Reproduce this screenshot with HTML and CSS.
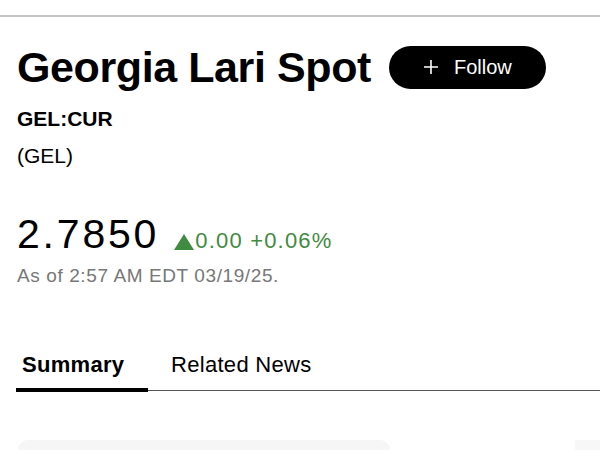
FILE: index.html
```html
<!DOCTYPE html>
<html lang="en">
<head>
    <meta charset="UTF-8">
    <meta name="viewport" content="width=device-width, initial-scale=1.0">
    <title>Georgia Lari Spot</title>
    <link rel="stylesheet" href="styles.css">
</head>
<body>

<div class="topbar"></div>

<div class="quote">
    <div class="title-row">
        <h1>Georgia Lari Spot</h1>
        <button class="follow">
            <svg width="16" height="16" viewBox="0 0 16 16"><path d="M8 1v14M1 8h14" stroke="#fff" stroke-width="1.6" fill="none"/></svg>
            Follow
        </button>
    </div>
    <p class="ticker">GEL:CUR</p>
    <p class="currency">(GEL)</p>

    <div class="price-row">
        <span class="price">2.7850</span>
        <span class="change">
            <svg class="arrow" width="20" height="16" viewBox="0 0 20 16"><path d="M10 0L20 16H0Z" fill="#3f8b40"/></svg>
            0.00 +0.06%
        </span>
    </div>
    <p class="asof">As of 2:57 AM EDT 03/19/25.</p>
</div>

<div class="tabs">
    <span class="tab active">Summary</span>
    <span class="tab">Related News</span>
</div>

<div class="cards">
    <div class="card"></div>
    <div class="card-side"></div>
</div>

</body>
</html>
```

FILE: styles.css
```css
body {
    margin: 0;
    font-family: "Liberation Sans", Arial, sans-serif;
    background-color: #fff;
    color: #000;
    overflow: hidden;
}
.topbar {
    height: 15px;
    border-bottom: 2px solid #c4c4c4;
}
.quote {
    padding: 0 17px;
}
.title-row {
    display: flex;
    align-items: center;
    gap: 18px;
    margin-top: 24px;
}
h1 {
    margin: 0;
    font-size: 43px;
    letter-spacing: -0.4px;
    line-height: 52px;
}
.follow {
    display: flex;
    align-items: center;
    gap: 15px;
    height: 43px;
    padding: 0 34px;
    background-color: #000;
    color: #fff;
    border: none;
    border-radius: 22px;
    font-family: inherit;
    font-size: 20px;
}
.ticker {
    margin: 13px 0 0;
    font-size: 21px;
    font-weight: bold;
    line-height: 26px;
}
.currency {
    margin: 11px 0 0;
    font-size: 21px;
    line-height: 26px;
}
.price-row {
    display: flex;
    align-items: baseline;
    gap: 18px;
    margin-top: 42px;
}
.price {
    font-size: 41px;
    letter-spacing: 2.8px;
    line-height: 46px;
    margin-right: -3px;
}
.change {
    display: flex;
    align-items: baseline;
    gap: 1px;
    color: #3f8b40;
    font-size: 22px;
    letter-spacing: 1.2px;
}
.arrow {
    align-self: center;
    margin-top: 2px;
}
.asof {
    margin: 8px 0 0;
    color: #777;
    font-size: 19px;
    letter-spacing: 0.6px;
}
.tabs {
    display: flex;
    margin: 63px 0 0 16px;
    border-bottom: 1px solid #555;
}
.tab {
    font-size: 22px;
    padding: 2px 6px 10px;
    letter-spacing: 0.3px;
}
.tab.active {
    font-weight: bold;
    width: 120px;
    border-bottom: 4px solid #000;
    margin-bottom: -2px;
}
.tab + .tab {
    padding-left: 23px;
}
.cards {
    display: flex;
    justify-content: space-between;
    margin-top: 49px;
}
.card {
    width: 372px;
    height: 40px;
    margin-left: 18px;
    background-color: #f6f6f6;
    border-radius: 10px;
}
.card-side {
    width: 25px;
    height: 40px;
    background-color: #f7f7f7;
}
```
